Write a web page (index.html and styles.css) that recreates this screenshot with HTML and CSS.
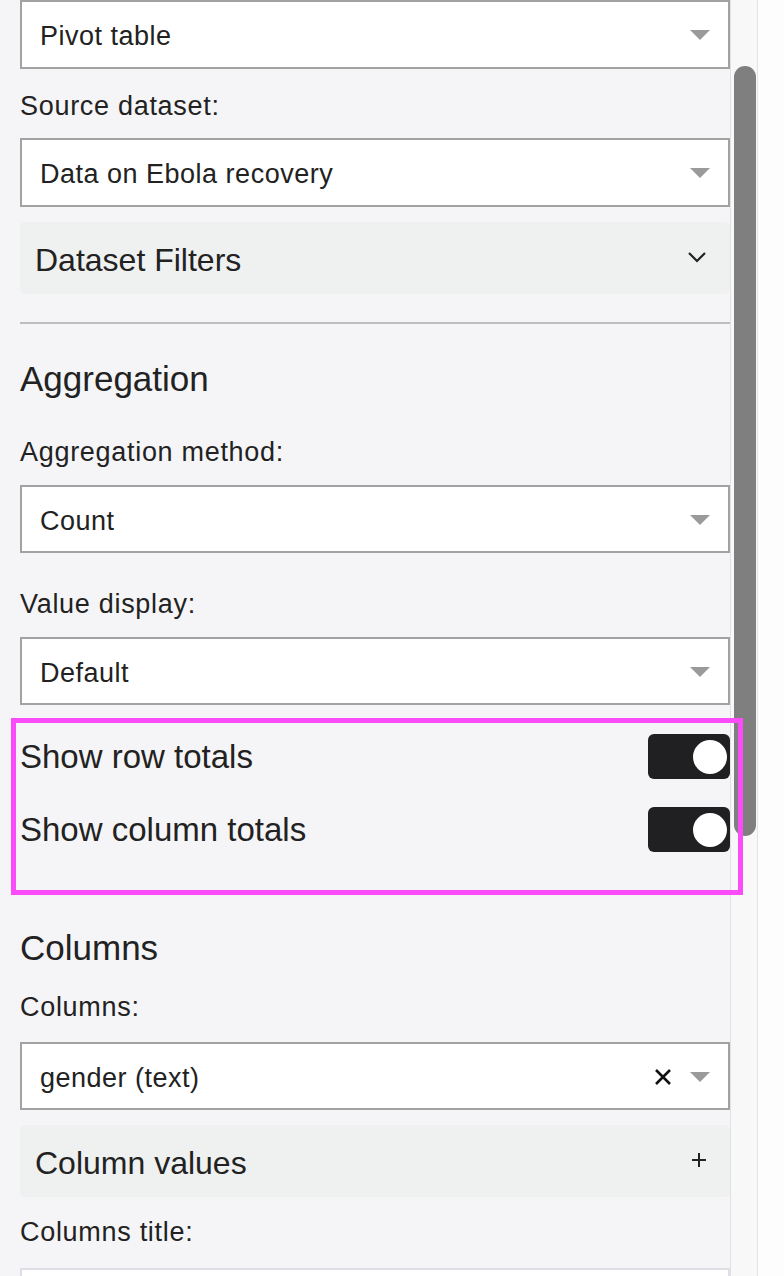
FILE: index.html
```html
<!DOCTYPE html>
<html>
<head>
<meta charset="utf-8">
<link rel="stylesheet" href="styles.css">
</head>
<body>
<div class="app">
  <div class="panel">
    <div class="select s-first"><span class="val">Pivot table</span><span class="caret"></span></div>
    <div class="label l-source">Source dataset:</div>
    <div class="select s-source"><span class="val">Data on Ebola recovery</span><span class="caret"></span></div>
    <div class="accordion a-filters">
      <span class="acc-title">Dataset Filters</span>
      <svg class="chev" width="20" height="12" viewBox="0 0 20 12"><path d="M2 2 L10 10 L18 2" fill="none" stroke="#222" stroke-width="2.2"/></svg>
    </div>
    <div class="rule"></div>
    <div class="heading h-agg">Aggregation</div>
    <div class="label l-method">Aggregation method:</div>
    <div class="select s-method"><span class="val">Count</span><span class="caret"></span></div>
    <div class="label l-display">Value display:</div>
    <div class="select s-display"><span class="val">Default</span><span class="caret"></span></div>
    <div class="toggle-row t-row"><span class="toggle-label">Show row totals</span><span class="toggle"><span class="knob"></span></span></div>
    <div class="toggle-row t-col"><span class="toggle-label">Show column totals</span><span class="toggle"><span class="knob"></span></span></div>
    <div class="heading h-cols">Columns</div>
    <div class="label l-cols">Columns:</div>
    <div class="select s-cols"><span class="val">gender (text)</span>
      <svg class="clear" width="18" height="18" viewBox="0 0 18 18"><path d="M2 2 L16 16 M16 2 L2 16" stroke="#111" stroke-width="2.6"/></svg>
      <span class="caret"></span></div>
    <div class="accordion a-values">
      <span class="acc-title">Column values</span>
      <svg class="plus" width="16" height="16" viewBox="0 0 16 16"><path d="M8 1 V15 M1 8 H15" stroke="#222" stroke-width="2"/></svg>
    </div>
    <div class="label l-title">Columns title:</div>
    <div class="input"></div>
  </div>
  <div class="track"><div class="thumb"></div></div>
  <div class="rest"></div>
</div>
<div class="highlight"></div>
</body>
</html>
```

FILE: styles.css
```css
html, body {
  margin: 0;
  padding: 0;
  background: #fcfcfc;
}
body {
  font-family: "Liberation Sans", Arial, sans-serif;
  color: #222;
  width: 784px;
  height: 1276px;
  overflow: hidden;
  position: relative;
}
.app {
  display: flex;
  height: 1276px;
}
.panel {
  width: 710px;
  padding-left: 20px;
  background: #f5f5f7;
  border-right: 1px solid #e1e1e3;
  height: 1276px;
  overflow: hidden;
  display: flex;
  flex-direction: column;
  flex: none;
}
.track {
  width: 27px;
  flex: none;
  background: #f8f8f8;
  border-right: 1px solid #e4e4e4;
  padding-left: 3px;
  box-sizing: border-box;
}
.thumb {
  width: 22px;
  margin-top: 66px;
  height: 770px;
  background: #7f7f7f;
  border-radius: 11px;
}
.rest {
  flex: 1;
  background: #fdfdfd;
}
.select {
  box-sizing: border-box;
  height: 68px;
  flex: none;
  border: 2px solid #a2a2a2;
  background: #fff;
  display: flex;
  align-items: center;
  padding: 4px 18px 0 18px;
  font-size: 27px;
  letter-spacing: 0.5px;
}
.select .val { flex: 1; }
.caret {
  width: 0;
  height: 0;
  margin-bottom: 3px;
  border-left: 10px solid transparent;
  border-right: 10px solid transparent;
  border-top: 10px solid #9a9a9a;
}
.clear { margin-right: 18px; margin-bottom: 3px; }
.label {
  font-size: 27px;
  letter-spacing: 0.7px;
  line-height: 32px;
  height: 32px;
  flex: none;
}
.heading {
  font-size: 35px;
  line-height: 40px;
  height: 40px;
  flex: none;
}
.accordion {
  box-sizing: border-box;
  height: 72px;
  flex: none;
  background: #eff0f0;
  border-radius: 5px;
  display: flex;
  align-items: center;
  padding: 4px 23px 0 15px;
}
.acc-title {
  flex: 1;
  font-size: 32px;
}
.chev, .plus { margin-bottom: 6px; }
.rule {
  height: 2px;
  background: #bdbdbd;
  flex: none;
}
.toggle-row {
  display: flex;
  align-items: center;
  height: 45px;
  flex: none;
}
.toggle-label {
  flex: 1;
  font-size: 33px;
}
.toggle {
  width: 82px;
  height: 45px;
  background: #202022;
  border-radius: 6px;
  display: flex;
  align-items: center;
  justify-content: flex-end;
  padding-right: 3px;
  box-sizing: border-box;
}
.knob {
  width: 34px;
  height: 34px;
  border-radius: 50%;
  background: #fff;
}
.input {
  height: 60px;
  flex: none;
  background: #fff;
  border: 2px solid #dedee6;
}
.s-first { height: 69px; margin-top: 0; }
.l-source { margin-top: 21px; }
.s-source { margin-top: 16px; height: 69px; }
.a-filters { margin-top: 15px; }
.rule { margin-top: 28px; }
.h-agg { margin-top: 35px; }
.l-method { margin-top: 37px; }
.s-method { margin-top: 17px; }
.l-display { margin-top: 35px; }
.s-display { margin-top: 17px; }
.t-row { margin-top: 29px; }
.t-col { margin-top: 28px; }
.h-cols { margin-top: 76px; }
.l-cols { margin-top: 23px; }
.s-cols { margin-top: 19px; }
.a-values { margin-top: 15px; }
.l-title { margin-top: 19px; }
.input { margin-top: 20px; }
.highlight {
  position: absolute;
  left: 11px;
  top: 718px;
  width: 722px;
  height: 167px;
  border: 5px solid #fa4cf9;
}
```
